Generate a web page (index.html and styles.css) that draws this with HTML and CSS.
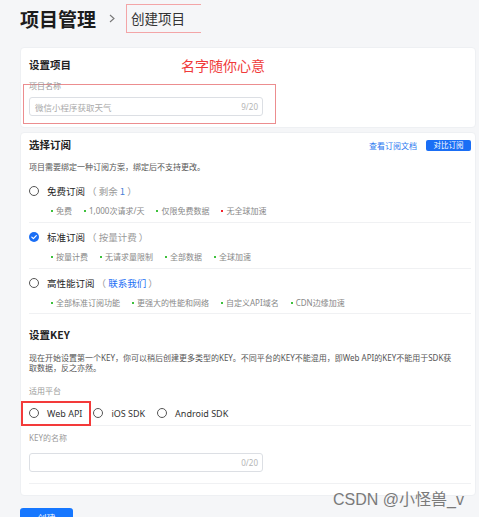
FILE: index.html
```html
<!DOCTYPE html>
<html lang="zh-CN">
<head>
<meta charset="utf-8">
<title>创建项目</title>
<link rel="stylesheet" href="styles.css">
</head>
<body>
<div class="page">
  <header class="crumbs">
    <h1 class="crumb-root">项目管理</h1>
    <span class="crumb-sep"><svg width="6" height="9" viewBox="0 0 6 9"><polyline points="1,1 5,4.5 1,8" fill="none" stroke="#777" stroke-width="1.1"/></svg></span>
    <span class="crumb-current">创建项目</span>
  </header>

  <section class="card card-project">
    <div class="card-head">
      <h2 class="card-title">设置项目</h2>
      <span class="note">名字随你心意</span>
    </div>
    <div class="field-marked">
      <span class="field-label field-label-tight">项目名称</span>
      <div class="input"><span class="placeholder">微信小程序获取天气</span><span class="count">9/20</span></div>
    </div>
  </section>

  <section class="card card-main">
    <div class="block-sub">
      <div class="card-head head-sub">
        <h2 class="card-title">选择订阅</h2>
        <div class="head-actions">
          <span class="link">查看订阅文档</span>
          <span class="btn-small">对比订阅</span>
        </div>
      </div>
      <p class="desc desc-sub">项目需要绑定一种订阅方案，绑定后不支持更改。</p>

      <div class="plan plan-first">
        <div class="plan-head"><span class="radio"></span><span class="plan-name">免费订阅</span><span class="plan-extra">（ 剩余 <span class="num">1</span> ）</span></div>
        <ul class="features">
          <li>免费</li>
          <li>1,000次请求/天</li>
          <li>仅限免费数据</li>
          <li class="neg">无全球加速</li>
        </ul>
      </div>

      <div class="plan">
        <div class="plan-head"><span class="radio radio-on"><svg width="10" height="10" viewBox="0 0 10 10"><circle cx="5" cy="5" r="5" fill="#1a6ef5"/><polyline points="2.8,5.1 4.4,6.6 7.3,3.6" fill="none" stroke="#fff" stroke-width="1.2" stroke-linecap="round" stroke-linejoin="round"/></svg></span><span class="plan-name">标准订阅</span><span class="plan-extra">（ 按量计费 ）</span></div>
        <ul class="features">
          <li>按量计费</li>
          <li>无请求量限制</li>
          <li>全部数据</li>
          <li>全球加速</li>
        </ul>
      </div>

      <div class="plan plan-last">
        <div class="plan-head"><span class="radio"></span><span class="plan-name">高性能订阅</span><span class="plan-extra">（ <span class="contact">联系我们</span> ）</span></div>
        <ul class="features">
          <li>全部标准订阅功能</li>
          <li>更强大的性能和网络</li>
          <li>自定义API域名</li>
          <li>CDN边缘加速</li>
        </ul>
      </div>
    </div>

    <div class="block-key">
      <h2 class="card-title key-title">设置KEY</h2>
      <p class="desc desc-key">现在开始设置第一个KEY，你可以稍后创建更多类型的KEY。不同平台的KEY不能混用，即Web API的KEY不能用于SDK获<br>取数据，反之亦然。</p>
      <span class="field-label platform-label">适用平台</span>
      <div class="platforms">
        <label class="opt opt-marked"><span class="radio"></span><span class="opt-text">Web API</span></label>
        <label class="opt"><span class="radio"></span><span class="opt-text">iOS SDK</span></label>
        <label class="opt"><span class="radio"></span><span class="opt-text">Android SDK</span></label>
      </div>
      <div class="key-name">
        <span class="field-label">KEY的名称</span>
        <div class="input input-key"><span class="placeholder"></span><span class="count">0/20</span></div>
      </div>
    </div>
  </section>

  <button class="btn-create">创建</button>
</div>
<div class="watermark">CSDN @小怪兽_v</div>
</body>
</html>
```

FILE: styles.css
```css
* {
  box-sizing: border-box;
  margin: 0;
  padding: 0;
}

html, body {
  width: 479px;
  height: 517px;
  overflow: hidden;
}

body {
  position: relative;
  background: #f5f6f8;
  font-family: "Noto Sans", "Noto Sans CJK SC", sans-serif;
  color: #333;
}

.page {
  padding: 0 3px 0 20px;
}

/* breadcrumb */
.crumbs {
  display: flex;
  align-items: center;
  height: 37px;
  margin-bottom: 10px;
}

.crumb-root {
  font-size: 19px;
  font-weight: 700;
  line-height: 1;
  color: #1c1c1c;
  font-family: "Noto Sans CJK SC", sans-serif;
}

.crumb-sep {
  display: flex;
  margin: 0 11px 0 13px;
}

.crumb-current {
  height: 29px;
  line-height: 27px;
  padding: 0 16px 0 4px;
  border: 1px solid #f3a5a7;
  border-right: none;
  font-size: 13.5px;
  color: #333;
  font-family: "Noto Sans CJK SC", sans-serif;
}

/* cards */
.card {
  background: #fff;
  border: 1px solid #eef0f3;
  border-radius: 4px;
  padding: 0 4px 0 8px;
}

.card-project {
  padding-top: 9px;
  padding-bottom: 3px;
}

.card-head {
  display: flex;
  align-items: center;
  height: 16px;
}

.card-title {
  font-size: 10.5px;
  font-weight: 700;
  line-height: 14px;
  color: #222;
  font-family: "Noto Sans CJK SC", sans-serif;
}

.note {
  margin-left: 110px;
  font-size: 14px;
  line-height: 16px;
  color: #f03a3a;
  font-family: "Noto Sans CJK SC", sans-serif;
}

.field-marked {
  margin-top: 11px;
  margin-left: -6px;
  width: 253px;
  border: 1px solid #ec8d8f;
  padding: 0 0 7px 5px;
}

.field-label {
  display: block;
  font-size: 8px;
  line-height: 10px;
  color: #9a9a9a;
}

.field-label-tight {
  margin-top: -4px;
}

.input {
  display: flex;
  align-items: center;
  justify-content: space-between;
  width: 234px;
  height: 19px;
  margin-top: 6px;
  padding: 0 4px 0 5px;
  border: 1px solid #dcdfe4;
  border-radius: 3px;
  font-size: 8.5px;
}

.placeholder {
  color: #aaa;
}

.count {
  color: #b5b5b5;
  font-size: 8px;
}

/* subscription */
.card-main {
  margin-top: 4px;
  padding-bottom: 11px;
}

.block-sub {
  padding-top: 5px;
}

.head-sub {
  height: 14px;
  justify-content: space-between;
}

.head-actions {
  display: flex;
  align-items: center;
}

.link {
  font-size: 8px;
  line-height: 11px;
  color: #2b78f0;
}

.btn-small {
  margin-left: 9px;
  width: 45px;
  height: 11px;
  line-height: 11px;
  text-align: center;
  font-size: 7.5px;
  color: #fff;
  background: #1a6ef5;
  border-radius: 2px;
}

.desc {
  font-size: 8px;
  color: #555;
}

.desc-sub {
  margin-top: 9px;
  line-height: 12px;
}

.plan {
  padding: 7px 0 6px;
  border-bottom: 1px solid #f0f1f3;
}

.plan-first {
  margin-top: 11px;
  padding-top: 0;
}

.plan-last {
  padding-bottom: 5px;
}

.plan-head {
  display: flex;
  align-items: center;
  height: 14px;
}

.radio {
  flex: none;
  width: 10px;
  height: 10px;
  border: 1px solid #555;
  border-radius: 50%;
  margin-right: 8px;
}

.radio-on {
  border: none;
  display: flex;
}

.plan-name {
  font-size: 9.5px;
  color: #222;
  font-family: "Noto Sans CJK SC", sans-serif;
}

.plan-extra {
  margin-left: 2px;
  font-size: 9.5px;
  color: #999;
  font-family: "Noto Sans CJK SC", sans-serif;
}

.num {
  color: #4a7fd6;
}

.contact {
  color: #1a6ef5;
}

.features {
  display: flex;
  gap: 12px;
  margin-top: 8px;
  padding-left: 22px;
  list-style: none;
}

.features li {
  display: flex;
  align-items: center;
  font-size: 8px;
  line-height: 10px;
  color: #888;
}

.features li::before {
  content: "";
  width: 2px;
  height: 2px;
  margin-right: 3px;
  background: #3ec13c;
}

.features li.neg::before {
  background: #f5222d;
}

/* key */
.block-key {
  padding-top: 14px;
}

.key-title {
  font-size: 10.5px;
}

.desc-key {
  margin-top: 11px;
  line-height: 10px;
  white-space: nowrap;
}

.platform-label {
  margin-top: 13px;
}

.platforms {
  display: flex;
  align-items: center;
  gap: 12px;
  height: 25px;
  margin-top: 5px;
  border-bottom: 1px solid #f0f1f3;
}

.opt {
  display: flex;
  align-items: center;
}

.opt-marked {
  height: 25px;
  margin-left: -8px;
  margin-right: -10px;
  padding: 0 7px 0 6px;
  border: 2px solid #f33a3a;
}

.opt-text {
  font-size: 9px;
  color: #333;
}

.key-name {
  padding: 7px 0 11px;
  border-bottom: 1px solid #f0f1f3;
}

.input-key {
  margin-top: 10px;
}

.btn-create {
  display: block;
  margin-top: 12px;
  width: 53px;
  height: 20px;
  border: none;
  border-radius: 3px;
  background: #1677ff;
  color: #fff;
  font-size: 9px;
  font-family: "Noto Sans CJK SC", sans-serif;
}

.watermark {
  position: absolute;
  left: 333px;
  top: 492px;
  font-family: "Liberation Sans", "Noto Sans CJK SC", sans-serif;
  font-size: 16px;
  line-height: 16px;
  color: #7a7a7a;
}
```
